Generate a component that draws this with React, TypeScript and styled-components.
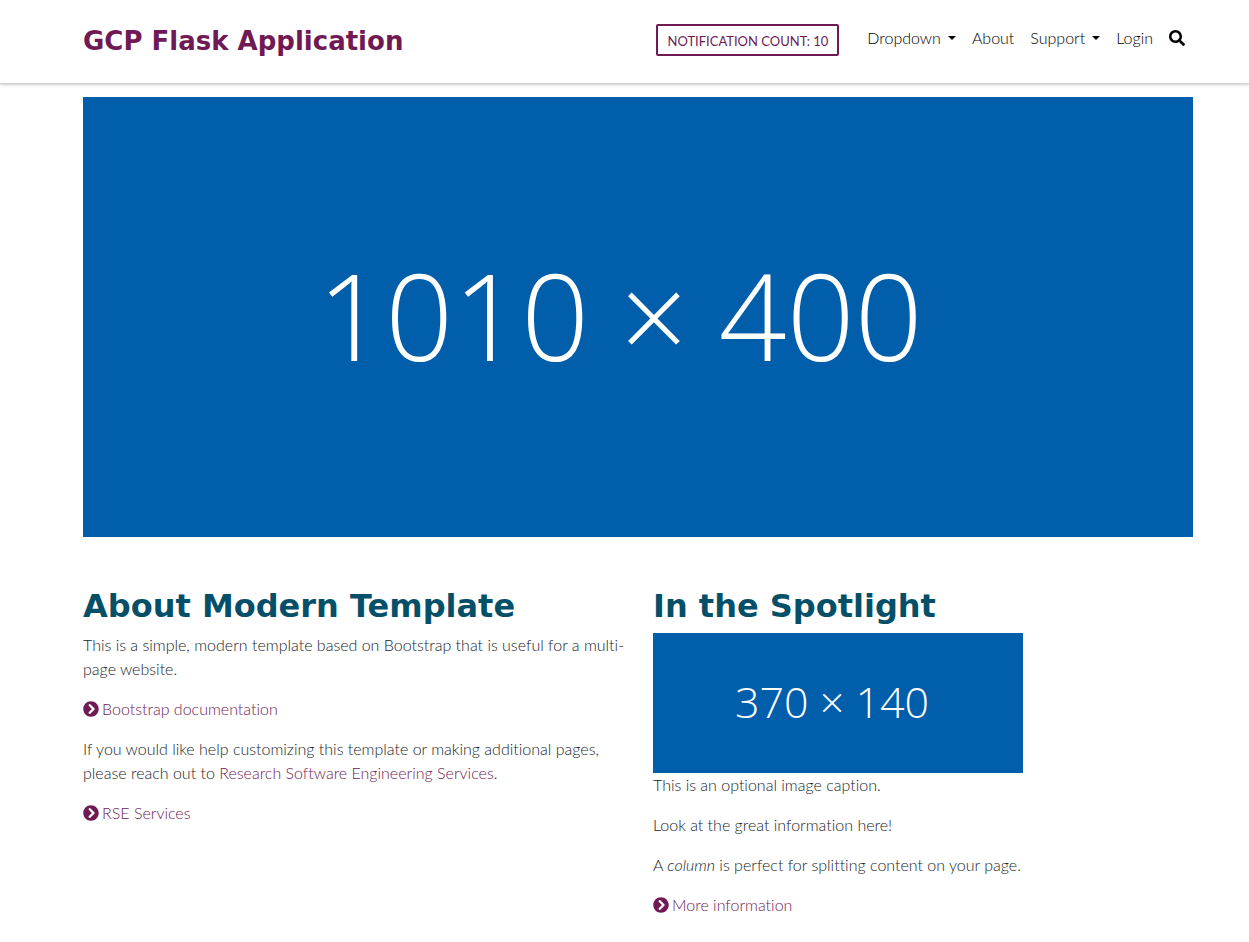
import React from "react";
import styled, { createGlobalStyle } from "styled-components";
import { FaSearch, FaChevronCircleRight } from "react-icons/fa";

const purple = "#701a55";
const teal = "#055068";
const blue = "#005eab";
const headingFont = `"DejaVu Sans", Verdana, sans-serif`;

const GlobalStyle = createGlobalStyle`
  *, *::before, *::after { box-sizing: border-box; }
  body {
    margin: 0;
    background: #fff;
    color: #212529;
    font-family: Lato, "Liberation Sans", sans-serif;
    font-size: 16px;
    font-weight: 300;
    line-height: 24px;
    font-variant-ligatures: none;
  }
`;

const Header = styled.header`
  padding-left: 27px;
  border-bottom: 1px solid #d0d0d0;
  box-shadow: 0 1px 3px rgba(0, 0, 0, 0.2);
`;

const Container = styled.div`
  width: 100%;
  max-width: 1140px;
  margin: 0 auto;
  padding: 0 15px;
`;

const HeaderRow = styled(Container)`
  display: flex;
  flex-wrap: wrap;
  justify-content: space-between;
  align-items: flex-start;
  min-height: 83px;
  padding-top: 18px;
`;

const Brand = styled.a`
  padding-top: 8px;
  color: ${purple};
  font: bold 26px/30px ${headingFont};
  text-decoration: none;
`;

const Tools = styled.div`
  display: flex;
  flex-wrap: wrap;
  align-items: flex-start;
  gap: 20px;
`;

const NotificationButton = styled.button`
  height: 32px;
  margin-top: 6px;
  padding: 2px 9px 0;
  border: 2px solid ${purple};
  border-radius: 2px;
  background: #fff;
  color: ${purple};
  font: 400 13px/20px Lato, "Liberation Sans", sans-serif;
  text-transform: uppercase;
  cursor: pointer;
`;

const NavList = styled.ul`
  display: flex;
  flex-wrap: wrap;
  margin: 0;
  padding: 0;
  list-style: none;
`;

const NavLink = styled.a`
  display: flex;
  align-items: center;
  height: 40px;
  padding: 0 8px;
  color: #000;
  text-decoration: none;
`;

const Caret = styled.span`
  margin-left: 7px;
  border-top: 4px solid #000;
  border-right: 4px solid transparent;
  border-left: 4px solid transparent;
`;

const Main = styled.main`
  padding: 13px 0 9px 27px;
`;

const Placeholder = styled.div<{ $height: number; $size: number; $shift: number; $maxWidth?: number }>`
  display: flex;
  align-items: center;
  justify-content: center;
  width: 100%;
  max-width: ${(p) => (p.$maxWidth ? `${p.$maxWidth}px` : "none")};
  height: ${(p) => p.$height}px;
  padding: 0 ${(p) => p.$shift}px 4px 0;
  background: ${blue};
  color: #fff;
  font: 300 ${(p) => p.$size}px/1 "Open Sans", "Noto Sans", sans-serif;
  white-space: nowrap;
`;

const Columns = styled.div`
  display: grid;
  grid-template-columns: 19fr 18fr;
  margin-top: 50px;
`;

const Column = styled.section`
  padding-right: 16px;
`;

const Heading = styled.h2`
  margin: 0 0 8px;
  color: ${teal};
  font: bold 32px/38px ${headingFont};
`;

const Text = styled.p`
  margin: 0 0 16px;
`;

const Figure = styled.figure`
  margin: 0 0 16px;
`;

const Link = styled.a`
  color: ${purple};
  text-decoration: none;
`;

const LinkIcon = styled(FaChevronCircleRight)`
  margin-right: 3px;
  vertical-align: -2px;
`;

const navItems = [
  { label: "Dropdown", menu: true },
  { label: "About", menu: false },
  { label: "Support", menu: true },
  { label: "Login", menu: false },
];

function ActionLink({ children }: { children: React.ReactNode }) {
  return (
    <Text>
      <Link href="#">
        <LinkIcon aria-hidden />
        {children}
      </Link>
    </Text>
  );
}

export default function App() {
  return (
    <>
      <GlobalStyle />
      <Header>
        <HeaderRow>
          <Brand href="#">GCP Flask Application</Brand>
          <Tools>
            <NotificationButton type="button">Notification Count: 10</NotificationButton>
            <nav>
              <NavList>
                {navItems.map((item) => (
                  <li key={item.label}>
                    <NavLink href="#">
                      {item.label}
                      {item.menu && <Caret />}
                    </NavLink>
                  </li>
                ))}
                <li>
                  <NavLink href="#" aria-label="Search">
                    <FaSearch />
                  </NavLink>
                </li>
              </NavList>
            </nav>
          </Tools>
        </HeaderRow>
      </Header>
      <Main>
        <Container>
          <Placeholder $height={440} $size={119} $shift={36}>
            1010 × 400
          </Placeholder>
          <Columns>
            <Column>
              <Heading>About Modern Template</Heading>
              <Text>
                This is a simple, modern template based on Bootstrap that is useful for a multi-page website.
              </Text>
              <ActionLink>Bootstrap documentation</ActionLink>
              <Text>
                If you would like help customizing this template or making additional pages, please reach out to{" "}
                <Link href="#">Research Software Engineering Services</Link>.
              </Text>
              <ActionLink>RSE Services</ActionLink>
            </Column>
            <Column>
              <Heading>In the Spotlight</Heading>
              <Figure>
                <Placeholder $height={140} $size={43} $shift={12} $maxWidth={370}>
                  370 × 140
                </Placeholder>
                <figcaption>This is an optional image caption.</figcaption>
              </Figure>
              <Text>Look at the great information here!</Text>
              <Text>
                A <em>column</em> is perfect for splitting content on your page.
              </Text>
              <ActionLink>More information</ActionLink>
            </Column>
          </Columns>
        </Container>
      </Main>
    </>
  );
}
